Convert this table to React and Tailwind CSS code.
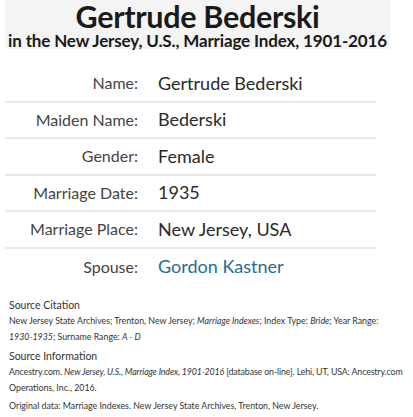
import React from "react";

const rows = [
  ["Name:", "Gertrude Bederski"],
  ["Maiden Name:", "Bederski"],
  ["Gender:", "Female"],
  ["Marriage Date:", "1935"],
  ["Marriage Place:", "New Jersey, USA"],
  ["Spouse:", "Gordon Kastner", true],
];

export default function App() {
  return (
    <div className="w-[413px] h-[417px] bg-white text-[#333] font-['Lato',sans-serif] overflow-hidden">
      {/* Header */}
      <div className="ml-[5px] w-[385px] h-[49px] bg-[#f4f4f4] flex flex-col items-center">
        <h1 className="text-[30.5px] leading-[33px] font-bold text-[#1a1a1a] tracking-[-0.3px]">Gertrude Bederski</h1>
        <div className="text-[17px] leading-[15px] font-bold text-[#1a1a1a] tracking-[-0.15px] whitespace-nowrap">
          in the New Jersey, U.S., Marriage Index, 1901-2016
        </div>
      </div>

      {/* Fact rows */}
      <div className="ml-[5px] w-[371px] mt-[17px]">
        {rows.map(([label, value, link], i) => (
          <div
            key={i}
            className={`flex items-center h-[36.5px] ${i < rows.length - 1 ? "border-b-2 border-[#e8e8e8]" : ""}`}
          >
            <div className="w-[133px] text-right text-[16px] text-[#444]">{label}</div>
            <div className={`ml-[20px] text-[18px] ${link ? "text-[#1f6e94]" : "text-[#2a2a2a]"}`}>{value}</div>
          </div>
        ))}
      </div>

      {/* Source */}
      <div className="px-[9px] mt-[12px] text-[8.8px] leading-[16px] text-[#333] whitespace-nowrap">
        <div className="text-[10.5px] leading-[16px]">Source Citation</div>
        <div>
          New Jersey State Archives; Trenton, New Jersey; <i>Marriage Indexes</i>; Index Type: <i>Bride</i>; Year Range:
        </div>
        <div>
          <i>1930-1935</i>; Surname Range: <i>A - D</i>
        </div>
        <div className="text-[10.5px] leading-[16px] mt-[3px]">Source Information</div>
        <div className="tracking-[-0.12px]">
          Ancestry.com. <i>New Jersey, U.S., Marriage Index, 1901-2016</i> [database on-line]. Lehi, UT, USA: Ancestry.com
        </div>
        <div>Operations, Inc., 2016.</div>
        <div className="mt-[2px]">Original data: Marriage Indexes. New Jersey State Archives, Trenton, New Jersey.</div>
      </div>
    </div>
  );
}
